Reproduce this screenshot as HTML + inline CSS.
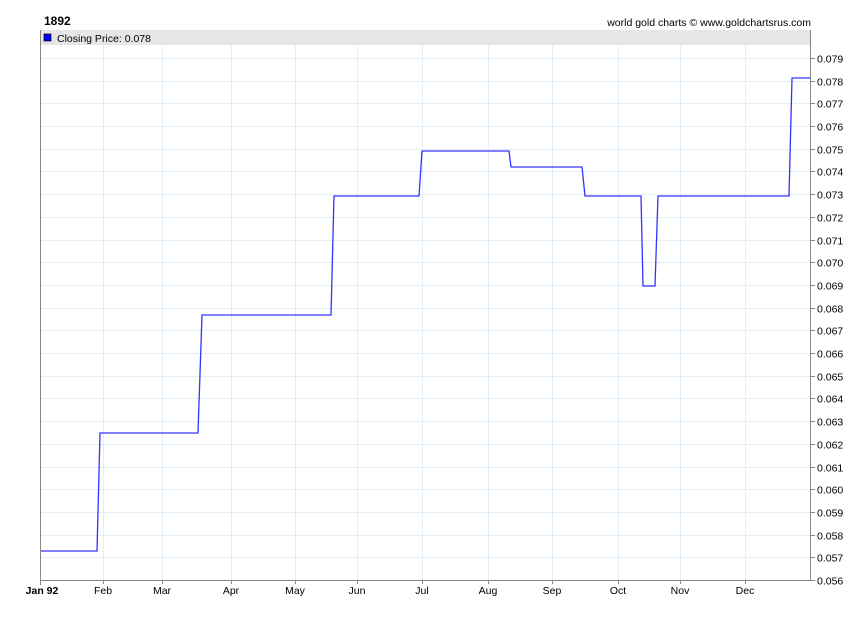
<!DOCTYPE html><html><head><style>body{margin:0;background:#fff;font-family:"Liberation Sans",sans-serif}</style></head><body>
<svg width="850" height="616" xmlns="http://www.w3.org/2000/svg" font-family="Liberation Sans, sans-serif">
<rect width="850" height="616" fill="#fff"/>
<text x="44" y="25" font-size="12" font-weight="bold" fill="#000">1892</text>
<text x="811" y="26" font-size="10.5" text-anchor="end" fill="#000">world gold charts © www.goldchartsrus.com</text>
<rect x="40" y="30" width="770" height="15" fill="#e6e6e6"/>
<g stroke="#e3eef7" stroke-width="1">
<line x1="103.5" y1="45" x2="103.5" y2="580"/><line x1="162.5" y1="45" x2="162.5" y2="580"/><line x1="231.5" y1="45" x2="231.5" y2="580"/><line x1="295.5" y1="45" x2="295.5" y2="580"/><line x1="357.5" y1="45" x2="357.5" y2="580"/><line x1="422.5" y1="45" x2="422.5" y2="580"/><line x1="488.5" y1="45" x2="488.5" y2="580"/><line x1="552.5" y1="45" x2="552.5" y2="580"/><line x1="618.5" y1="45" x2="618.5" y2="580"/><line x1="680.5" y1="45" x2="680.5" y2="580"/><line x1="745.5" y1="45" x2="745.5" y2="580"/>
</g>
<g stroke="#e3eef7" stroke-width="1" id="hg"></g>
<rect x="44" y="34" width="7" height="7" fill="#0000ff" stroke="#000" stroke-width="0.7"/>
<text x="57" y="42" font-size="10.5" fill="#000">Closing Price: 0.078</text>
<polyline fill="none" stroke="#3333ff" stroke-width="1.3" points="40,551 97,551 100,433 198,433 202,315 331,315 334,196 419,196 422,151 509,151 511,167 582,167 585,196 641,196 643,286 655,286 658,196 789,196 792,78 810,78"/>
<path d="M40.5 30V580.5H810.5V30" fill="none" stroke="#888" stroke-width="1"/>
<g id="yl" font-size="10.5" fill="#000"></g>
<g font-size="10.5" fill="#000" text-anchor="middle">
<text x="42" y="594" font-weight="bold">Jan 92</text><text x="103" y="594">Feb</text><text x="162" y="594">Mar</text><text x="231" y="594">Apr</text><text x="295" y="594">May</text><text x="357" y="594">Jun</text><text x="422" y="594">Jul</text><text x="488" y="594">Aug</text><text x="552" y="594">Sep</text><text x="618" y="594">Oct</text><text x="680" y="594">Nov</text><text x="745" y="594">Dec</text>
</g>
<g stroke="#888"><line x1="40.5" y1="580" x2="40.5" y2="585"/><line x1="103.5" y1="580" x2="103.5" y2="584"/><line x1="162.5" y1="580" x2="162.5" y2="584"/><line x1="231.5" y1="580" x2="231.5" y2="584"/><line x1="295.5" y1="580" x2="295.5" y2="584"/><line x1="357.5" y1="580" x2="357.5" y2="584"/><line x1="422.5" y1="580" x2="422.5" y2="584"/><line x1="488.5" y1="580" x2="488.5" y2="584"/><line x1="552.5" y1="580" x2="552.5" y2="584"/><line x1="618.5" y1="580" x2="618.5" y2="584"/><line x1="680.5" y1="580" x2="680.5" y2="584"/><line x1="745.5" y1="580" x2="745.5" y2="584"/></g>
<g id="yt" stroke="#888"></g>
</svg>
<script>
var ns="http://www.w3.org/2000/svg",hg=document.getElementById("hg"),yl=document.getElementById("yl"),yt=document.getElementById("yt");
for(var i=0;i<=23;i++){var y=Math.round(580-i*22.7)+0.5;
if(i>0){var l=document.createElementNS(ns,"line");l.setAttribute("x1",41);l.setAttribute("x2",810);l.setAttribute("y1",y);l.setAttribute("y2",y);hg.appendChild(l);}
var t=document.createElementNS(ns,"line");t.setAttribute("x1",810);t.setAttribute("x2",815);t.setAttribute("y1",y);t.setAttribute("y2",y);yt.appendChild(t);
var tx=document.createElementNS(ns,"text");tx.setAttribute("x",817);tx.setAttribute("y",y+4);tx.textContent=(0.056+i*0.001).toFixed(3);yl.appendChild(tx);}
</script>
</body></html>
